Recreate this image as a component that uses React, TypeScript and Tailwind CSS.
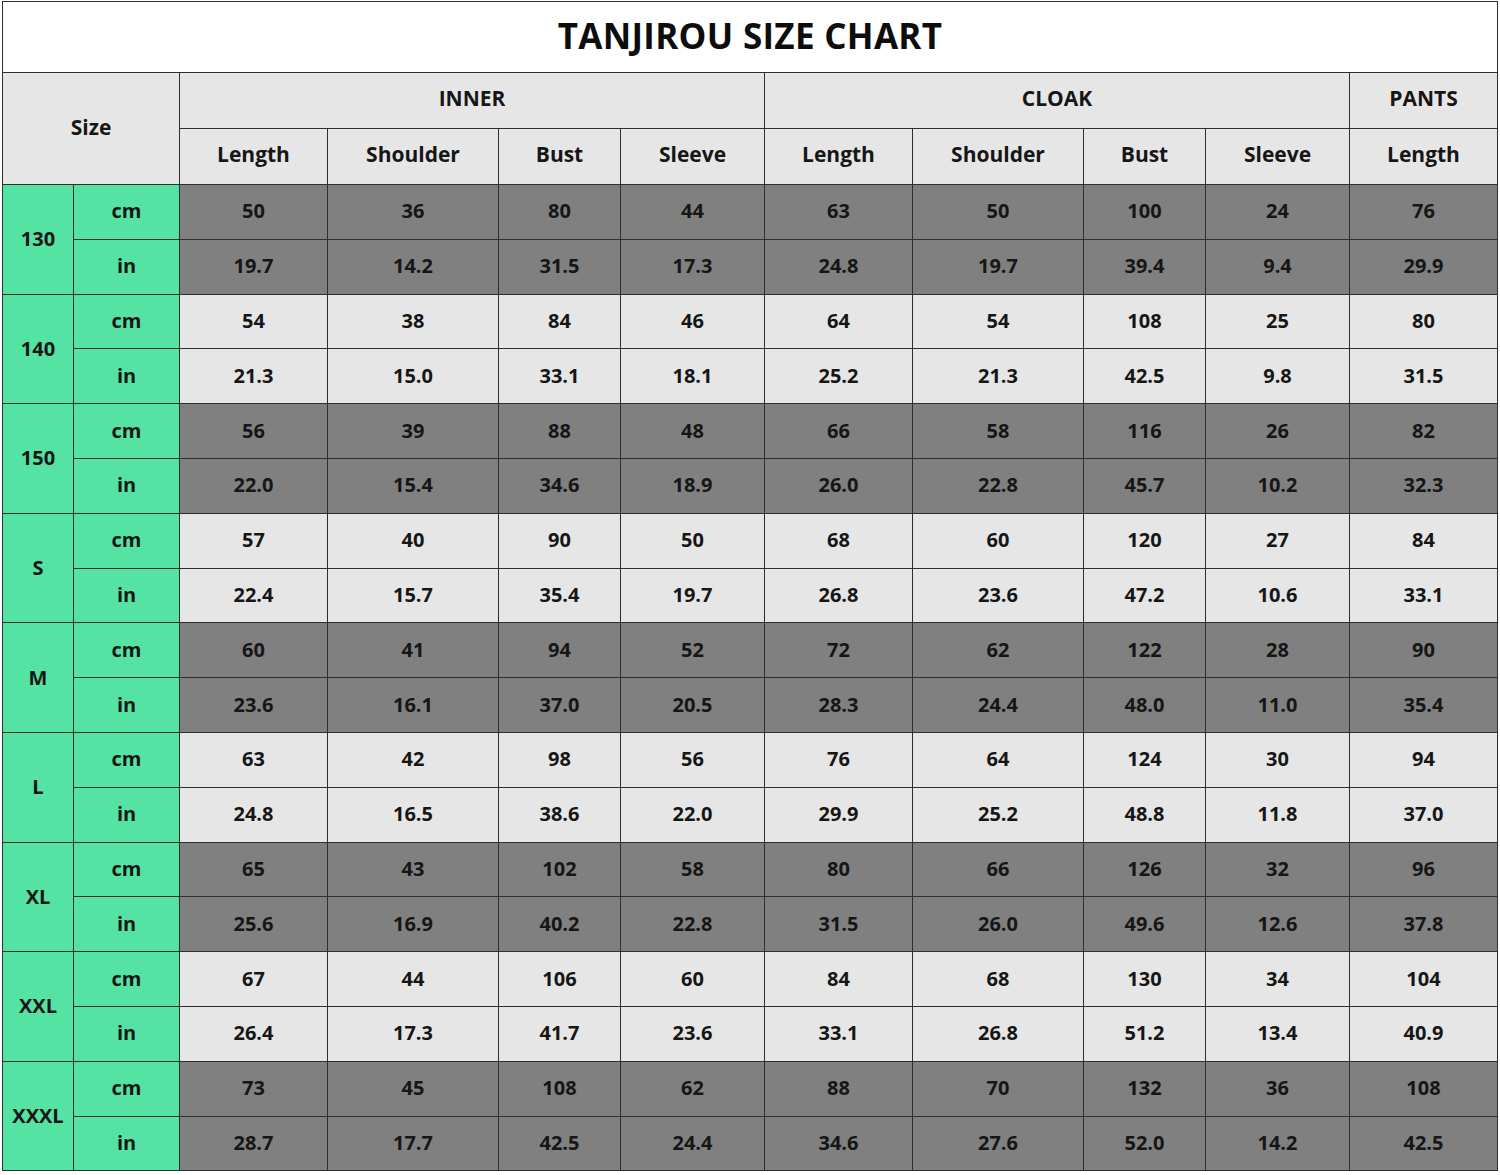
const groups = [
  { size: "130", cm: ["50", "36", "80", "44", "63", "50", "100", "24", "76"], inch: ["19.7", "14.2", "31.5", "17.3", "24.8", "19.7", "39.4", "9.4", "29.9"] },
  { size: "140", cm: ["54", "38", "84", "46", "64", "54", "108", "25", "80"], inch: ["21.3", "15.0", "33.1", "18.1", "25.2", "21.3", "42.5", "9.8", "31.5"] },
  { size: "150", cm: ["56", "39", "88", "48", "66", "58", "116", "26", "82"], inch: ["22.0", "15.4", "34.6", "18.9", "26.0", "22.8", "45.7", "10.2", "32.3"] },
  { size: "S", cm: ["57", "40", "90", "50", "68", "60", "120", "27", "84"], inch: ["22.4", "15.7", "35.4", "19.7", "26.8", "23.6", "47.2", "10.6", "33.1"] },
  { size: "M", cm: ["60", "41", "94", "52", "72", "62", "122", "28", "90"], inch: ["23.6", "16.1", "37.0", "20.5", "28.3", "24.4", "48.0", "11.0", "35.4"] },
  { size: "L", cm: ["63", "42", "98", "56", "76", "64", "124", "30", "94"], inch: ["24.8", "16.5", "38.6", "22.0", "29.9", "25.2", "48.8", "11.8", "37.0"] },
  { size: "XL", cm: ["65", "43", "102", "58", "80", "66", "126", "32", "96"], inch: ["25.6", "16.9", "40.2", "22.8", "31.5", "26.0", "49.6", "12.6", "37.8"] },
  { size: "XXL", cm: ["67", "44", "106", "60", "84", "68", "130", "34", "104"], inch: ["26.4", "17.3", "41.7", "23.6", "33.1", "26.8", "51.2", "13.4", "40.9"] },
  { size: "XXXL", cm: ["73", "45", "108", "62", "88", "70", "132", "36", "108"], inch: ["28.7", "17.7", "42.5", "24.4", "34.6", "27.6", "52.0", "14.2", "42.5"] },
];

const colWidths = [71, 106, 148, 171, 122, 144, 148, 171, 122, 144, 148];
const subHeads = ["Length", "Shoulder", "Bust", "Sleeve", "Length", "Shoulder", "Bust", "Sleeve", "Length"];

const cell = "border border-[#2e2e2e] text-center align-middle p-0";

export default function App() {
  return (
    <div className="w-[1500px] h-[1175px] bg-white pt-px pl-[2px]">
      <table
        className="border-collapse table-fixed text-[#161616] font-bold"
        style={{ width: 1495, fontFamily: '"Open Sans", "Noto Sans", sans-serif' }}
      >
        <colgroup>
          {colWidths.map((w, i) => (
            <col key={i} style={{ width: w }} />
          ))}
        </colgroup>
        <tbody>
          {/* title */}
          <tr className="h-[71px]">
            <td colSpan={11} className={`${cell} bg-white text-[35px] tracking-[0.3px] text-[#0d0d0d] pb-[2px]`}>
              TANJIROU SIZE CHART
            </td>
          </tr>

          {/* section headers */}
          <tr className="h-[56px] bg-[#e6e6e6] text-[21px]">
            <td colSpan={2} rowSpan={2} className={`${cell} pb-[2px]`}>Size</td>
            <td colSpan={4} className={`${cell} pb-[3px]`}>INNER</td>
            <td colSpan={4} className={`${cell} pb-[3px]`}>CLOAK</td>
            <td className={`${cell} pb-[3px]`}>PANTS</td>
          </tr>
          <tr className="h-[56px] bg-[#e6e6e6] text-[21px]">
            {subHeads.map((h, i) => (
              <td key={i} className={`${cell} pb-[3px]`}>{h}</td>
            ))}
          </tr>

          {groups.map((g, gi) => {
            const dark = gi % 2 === 0;
            const fill = dark ? "bg-[#808080]" : "bg-[#e6e6e6]";
            return [
              <tr key={g.size + "cm"} className="h-[54.8px] text-[20px]">
                <td rowSpan={2} className={`${cell} bg-[#55e3a4]`}>{g.size}</td>
                <td className={`${cell} bg-[#55e3a4] pb-[1px]`}>cm</td>
                {g.cm.map((v, i) => (
                  <td key={i} className={`${cell} ${fill} pb-[1px]`}>{v}</td>
                ))}
              </tr>,
              <tr key={g.size + "in"} className="h-[54.8px] text-[20px]">
                <td className={`${cell} bg-[#55e3a4] pb-[1px]`}>in</td>
                {g.inch.map((v, i) => (
                  <td key={i} className={`${cell} ${fill} pb-[1px]`}>{v}</td>
                ))}
              </tr>,
            ];
          })}
        </tbody>
      </table>
    </div>
  );
}
